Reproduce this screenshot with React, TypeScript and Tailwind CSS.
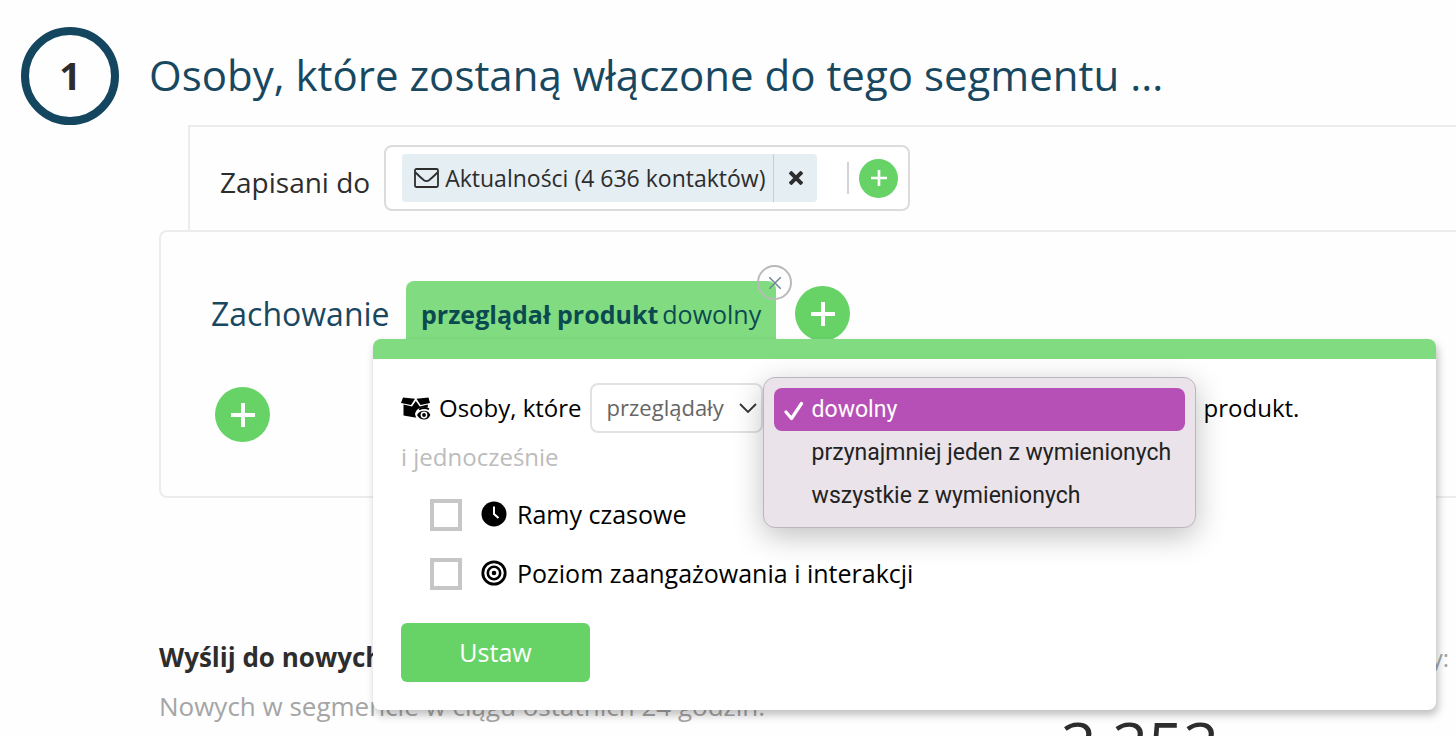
import { useState } from 'react';

const options = ['dowolny', 'przynajmniej jeden z wymienionych', 'wszystkie z wymienionych'];

function PlusIcon({ className }: { className: string }) {
  return (
    <svg viewBox="0 0 24 24" className={className} stroke="currentColor" strokeWidth="4" fill="none" aria-hidden="true">
      <path d="M12 0v24M0 12h24" />
    </svg>
  );
}

function EnvelopeIcon() {
  return (
    <svg viewBox="0 0 25 20" className="h-5 w-[25px] shrink-0" fill="none" stroke="currentColor" strokeWidth="1.8" aria-hidden="true">
      <rect x="1" y="1" width="23" height="18" rx="1.5" />
      <path d="M1.5 4.500c3 3 6 5.800 8.500 7.700 1.800 1.300 3.200 1.300 5 0 2.500-1.900 5.500-4.700 8.500-7.700" />
    </svg>
  );
}

function BoxEyeIcon() {
  return (
    <svg viewBox="0 0 30 23" className="h-[23px] w-[30px] shrink-0" aria-hidden="true">
      <path d="M2 .5l12 1.300-4 6.200-10-2z" />
      <path d="M27.500.5L15.500 1.800l4 6.200 9.500-2z" />
      <path d="M2.500 7.500l8.500 2 3.800-5.500 4 5.500 8-2v13H14l-11.500-2z" />
      <path d="M14 17c1-4.500 4-6.500 9-6.500H30V23H17c-1.500-1.500-2.500-3.500-3-6z" fill="#fff" />
      <path d="M18 12.500c3-1.800 7-1.800 10-.3" fill="none" stroke="#000" strokeWidth="1.800" />
      <path d="M16 18c1.800-3 4-4.300 7-4.300s5 1.300 6.300 4.300c-1.300 3-3.300 4.500-6.300 4.500S17.800 21 16 18z" />
      <circle cx="23" cy="18" r="3.400" fill="#fff" />
      <circle cx="23" cy="18" r="1.900" />
    </svg>
  );
}

function ClockIcon() {
  return (
    <svg viewBox="0 0 26 26" className="h-[26px] w-[26px]" aria-hidden="true">
      <circle cx="13" cy="13" r="12.500" />
      <path d="M13 5.500V13l4.500 4" fill="none" stroke="#fff" strokeWidth="2" />
    </svg>
  );
}

function TargetIcon() {
  return (
    <svg viewBox="0 0 26 26" className="h-[26px] w-[26px]" fill="none" stroke="currentColor" aria-hidden="true">
      <circle cx="13" cy="13" r="11.200" strokeWidth="2.800" />
      <circle cx="13" cy="13" r="6.200" strokeWidth="2.600" />
      <circle cx="13" cy="13" r="2.300" fill="currentColor" stroke="none" />
    </svg>
  );
}

function CheckRow({ id, label, icon }: { id: string; label: string; icon: React.ReactNode }) {
  return (
    <div className="flex h-[59px] items-center pl-[29px]">
      <input id={id} type="checkbox" className="h-8 w-8 appearance-none border-4 border-[#c6c6c6] bg-white checked:bg-[#67d367]" />
      <label htmlFor={id} className="flex items-center gap-2.5 pl-[19px] text-[25px]">
        {icon}
        {label}
      </label>
    </div>
  );
}

function ConditionPopover() {
  const [selected, setSelected] = useState(options[0]);

  return (
    <div className="absolute top-[107px] right-5 left-[212px] z-10 rounded-lg bg-white text-2xl text-black shadow-[2px_5px_8px_rgba(0,0,0,0.25)]">
      <div className="h-5 rounded-t-lg bg-[#81dc81]" />
      <div className="px-7 pt-6 pb-7">
        <div className="flex h-[50px] items-center">
          <BoxEyeIcon />
          <label htmlFor="action" className="pr-2 pl-2 whitespace-nowrap">Osoby, które</label>
          <div className="relative">
            <select id="action" className="block h-[50px] w-[173px] appearance-none rounded-lg border-2 border-[#e2e2e2] bg-white pl-[15px] text-[22px] text-[#666]">
              <option>przeglądały</option>
            </select>
            <svg viewBox="0 0 18 10" className="pointer-events-none absolute top-5 right-1.5 h-2.5 w-[18px]" fill="none" stroke="#333" strokeWidth="1.800" aria-hidden="true">
              <path d="M1 1l8 8 8-8" />
            </svg>
          </div>
          <div className="relative h-[50px] w-[433px]">
            <ul
              role="listbox"
              aria-label="Produkt"
              className="absolute -top-1.5 left-0 w-full rounded-xl border border-[#bdb5bc] bg-[#eae3e9] p-2.5 text-[23px] text-[#222] shadow-[0_8px_30px_rgba(0,0,0,0.25)]"
            >
              {options.map((option) => (
                <li
                  key={option}
                  role="option"
                  aria-selected={option === selected}
                  onClick={() => setSelected(option)}
                  className="flex h-[43px] items-center rounded-lg pt-0.5 pl-[10px] font-[Roboto,sans-serif] whitespace-nowrap aria-selected:bg-[#b750b6] aria-selected:text-white"
                >
                  <span className="flex w-7 shrink-0">
                    {option === selected && (
                      <svg viewBox="0 0 20 20" className="h-5 w-5" fill="none" stroke="currentColor" strokeWidth="3.200" strokeLinecap="round" strokeLinejoin="round" aria-hidden="true">
                        <path d="M2 11l5.500 6.500L17.500 2.500" />
                      </svg>
                    )}
                  </span>
                  {option}
                </li>
              ))}
            </ul>
          </div>
          <span className="pl-2">produkt.</span>
        </div>
        <p className="leading-[48px] text-[#bcbcbc]">i jednocześnie</p>
        <div className="mt-1">
          <CheckRow id="time" label="Ramy czasowe" icon={<ClockIcon />} />
          <CheckRow id="level" label="Poziom zaangażowania i interakcji" icon={<TargetIcon />} />
        </div>
        <button type="button" className="mt-5 h-[59px] w-[189px] rounded-md bg-[#67d367] text-[25px] font-medium text-white">
          Ustaw
        </button>
      </div>
    </div>
  );
}

export default function App() {
  return (
    <main className="h-screen overflow-hidden bg-[#fefefe] font-['Open_Sans',sans-serif] text-[#2d2d2d]">
      <header className="flex items-center gap-[30px] pt-[27px] pl-[21px]">
        <div className="flex h-[98px] w-[98px] shrink-0 items-center justify-center rounded-full border-8 border-[#144660] pb-0.5 text-[38px] font-bold">
          1
        </div>
        <h1 className="pb-1 text-[42px] whitespace-nowrap text-[#184860]">Osoby, które zostaną włączone do tego segmentu ...</h1>
      </header>

      {/* Lists */}
      <section className="ml-[188px] flex items-center gap-3.5 border-t-2 border-l-2 border-[#ececec] pt-[18px] pb-[19px] pl-[30px]">
        <span className="pt-2 text-[28px] whitespace-nowrap">Zapisani do</span>
        <div className="flex h-[66px] items-center rounded-lg border-2 border-[#dcdcdc] bg-white pr-2.5 pl-4">
          <div className="flex h-12 items-center rounded bg-[#e4eef3] text-[23px]">
            <span className="flex items-center gap-1.5 pr-2 pl-3 whitespace-nowrap">
              <EnvelopeIcon />
              Aktualności (4 636 kontaktów)
            </span>
            <button type="button" aria-label="Usuń" className="flex h-full w-11 items-center justify-center border-l border-[#c3cfd5]">
              <svg viewBox="0 0 14 14" className="h-3.5 w-3.5" stroke="currentColor" strokeWidth="4" aria-hidden="true">
                <path d="M1 1l12 12M13 1L1 13" />
              </svg>
            </button>
          </div>
          <span className="ml-[30px] h-8 w-0.5 bg-[#d3d3d3]" />
          <button type="button" aria-label="Dodaj listę" className="ml-2.5 flex h-[39px] w-[39px] items-center justify-center rounded-full bg-[#67d367] text-white">
            <PlusIcon className="h-4 w-4" />
          </button>
        </div>
      </section>

      {/* Behaviour */}
      <section className="relative ml-[159px] rounded-l-lg border-2 border-r-0 border-[#ececec] bg-[#fefefe] pt-[49px] pb-[54px] pl-[50px]">
        <div className="flex items-start">
          <h2 className="w-[195px] text-[32px] leading-[66px] text-[#184860]">Zachowanie</h2>
          <div className="relative flex h-[60px] items-center gap-1 rounded-t-lg bg-[#81dc81] px-[15px] pt-2 text-[25px] whitespace-nowrap text-[#0b4a50]">
            <b>przeglądał produkt</b> dowolny
            <button type="button" aria-label="Usuń warunek" className="absolute -top-4 -right-4 flex h-[35px] w-[35px] items-center justify-center rounded-full border-2 border-[#b9b9b9]">
              <svg viewBox="0 0 12 12" className="h-3 w-3" stroke="#6d8793" strokeWidth="1.500" aria-hidden="true">
                <path d="M0 0l12 12M12 0L0 12" />
              </svg>
            </button>
          </div>
          <button type="button" aria-label="Dodaj warunek" className="mt-[5px] ml-[19px] flex h-[55px] w-[55px] items-center justify-center rounded-full bg-[#67d367] text-white">
            <PlusIcon className="h-6 w-6" />
          </button>
        </div>
        <button type="button" aria-label="Dodaj grupę" className="mt-10 ml-1 flex h-[55px] w-[55px] items-center justify-center rounded-full bg-[#67d367] text-white">
          <PlusIcon className="h-6 w-6" />
        </button>
        <ConditionPopover />
      </section>

      {/* Summary */}
      <section className="flex justify-between pt-[135px] pr-[7px] pl-[159px]">
        <div className="text-[26px] leading-[49px] whitespace-nowrap">
          <p className="font-bold">Wyślij do nowych</p>
          <p className="text-[#a5a5a5]">Nowych w segmencie w ciągu ostatnich 24 godzin.</p>
        </div>
        <div className="w-[388px]">
          <p className="text-right text-2xl leading-[49px] text-[#a5a5a5]">Kontakty:</p>
          <p className="pt-4 text-[62px]">3 353</p>
        </div>
      </section>
    </main>
  );
}
